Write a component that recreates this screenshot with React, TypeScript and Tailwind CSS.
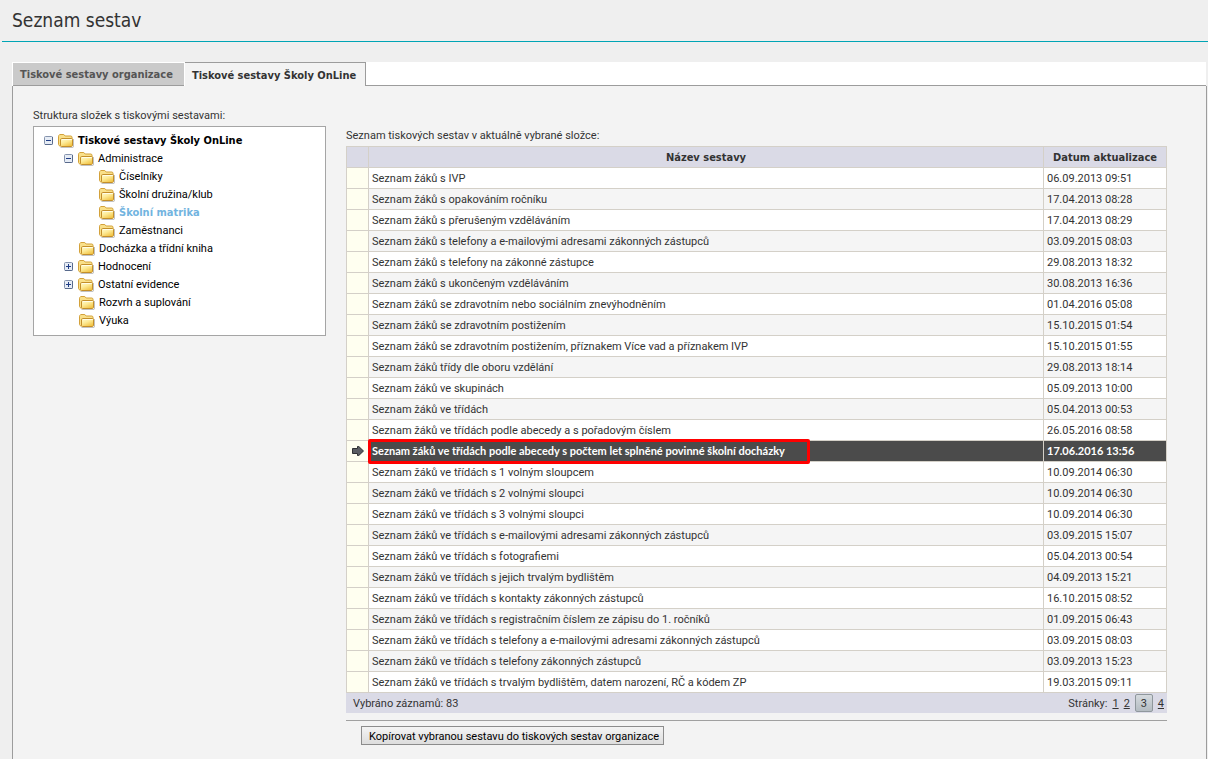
import { clsx } from 'clsx';

interface TreeNode {
  label: string;
  level: number;
  state?: 'open' | 'closed';
  selected?: boolean;
}

interface Report {
  name: string;
  updated: string;
}

const TREE: TreeNode[] = [
  { label: 'Tiskové sestavy Školy OnLine', level: 0, state: 'open' },
  { label: 'Administrace', level: 1, state: 'open' },
  { label: 'Číselníky', level: 2 },
  { label: 'Školní družina/klub', level: 2 },
  { label: 'Školní matrika', level: 2, selected: true },
  { label: 'Zaměstnanci', level: 2 },
  { label: 'Docházka a třídní kniha', level: 1 },
  { label: 'Hodnocení', level: 1, state: 'closed' },
  { label: 'Ostatní evidence', level: 1, state: 'closed' },
  { label: 'Rozvrh a suplování', level: 1 },
  { label: 'Výuka', level: 1 },
];

const REPORTS: Report[] = [
  { name: 'Seznam žáků s IVP', updated: '06.09.2013 09:51' },
  { name: 'Seznam žáků s opakováním ročníku', updated: '17.04.2013 08:28' },
  { name: 'Seznam žáků s přerušeným vzděláváním', updated: '17.04.2013 08:29' },
  { name: 'Seznam žáků s telefony a e-mailovými adresami zákonných zástupců', updated: '03.09.2015 08:03' },
  { name: 'Seznam žáků s telefony na zákonné zástupce', updated: '29.08.2013 18:32' },
  { name: 'Seznam žáků s ukončeným vzděláváním', updated: '30.08.2013 16:36' },
  { name: 'Seznam žáků se zdravotním nebo sociálním znevýhodněním', updated: '01.04.2016 05:08' },
  { name: 'Seznam žáků se zdravotním postižením', updated: '15.10.2015 01:54' },
  { name: 'Seznam žáků se zdravotním postižením, příznakem Více vad a příznakem IVP', updated: '15.10.2015 01:55' },
  { name: 'Seznam žáků třídy dle oboru vzdělání', updated: '29.08.2013 18:14' },
  { name: 'Seznam žáků ve skupinách', updated: '05.09.2013 10:00' },
  { name: 'Seznam žáků ve třídách', updated: '05.04.2013 00:53' },
  { name: 'Seznam žáků ve třídách podle abecedy a s pořadovým číslem', updated: '26.05.2016 08:58' },
  { name: 'Seznam žáků ve třídách podle abecedy s počtem let splněné povinné školní docházky', updated: '17.06.2016 13:56' },
  { name: 'Seznam žáků ve třídách s 1 volným sloupcem', updated: '10.09.2014 06:30' },
  { name: 'Seznam žáků ve třídách s 2 volnými sloupci', updated: '10.09.2014 06:30' },
  { name: 'Seznam žáků ve třídách s 3 volnými sloupci', updated: '10.09.2014 06:30' },
  { name: 'Seznam žáků ve třídách s e-mailovými adresami zákonných zástupců', updated: '03.09.2015 15:07' },
  { name: 'Seznam žáků ve třídách s fotografiemi', updated: '05.04.2013 00:54' },
  { name: 'Seznam žáků ve třídách s jejich trvalým bydlištěm', updated: '04.09.2013 15:21' },
  { name: 'Seznam žáků ve třídách s kontakty zákonných zástupců', updated: '16.10.2015 08:52' },
  { name: 'Seznam žáků ve třídách s registračním číslem ze zápisu do 1. ročníků', updated: '01.09.2015 06:43' },
  { name: 'Seznam žáků ve třídách s telefony a e-mailovými adresami zákonných zástupců', updated: '03.09.2015 08:03' },
  { name: 'Seznam žáků ve třídách s telefony zákonných zástupců', updated: '03.09.2013 15:23' },
  { name: 'Seznam žáků ve třídách s trvalým bydlištěm, datem narození, RČ a kódem ZP', updated: '19.03.2015 09:11' },
];

const SELECTED = 13;
const PAGES = [1, 2, 3, 4];
const CURRENT_PAGE = 3;

function FolderIcon() {
  return (
    <svg width="16" height="16" viewBox="0 0 16 16" className="shrink-0" aria-hidden="true">
      <defs>
        <linearGradient id="folder" x1="0" y1="0" x2="0.6" y2="1">
          <stop offset="0" stopColor="#fffbd2" />
          <stop offset="0.5" stopColor="#fdeb98" />
          <stop offset="1" stopColor="#f2c548" />
        </linearGradient>
      </defs>
      <path d="M2.5 15.5h12c.6 0 1-.4 1-1V7" fill="none" stroke="#8f8f8f" strokeOpacity=".55" />
      <path
        d="M2 14.5L.5 12.5V4.2c0-.4.2-.7.5-1l.7-.7h4.1l1.4 1.5h5.6c.7 0 1.2.5 1.2 1.2v7"
        fill="#f9e08a"
        stroke="#d3a13a"
      />
      <path
        d="M3.5 14.5c-.8 0-1-.5-1-1.2V7.8c0-.8.4-1.3 1.2-1.3h9.6c.8 0 1.2.4 1.2 1.1v5.6c0 .8-.5 1.3-1.2 1.3z"
        fill="url(#folder)"
        stroke="#c48f2a"
      />
      <path d="M4 7.5h9.8" stroke="#fffde8" />
    </svg>
  );
}

function ToggleIcon({ open }: { open: boolean }) {
  return (
    <svg width="9" height="9" viewBox="0 0 9 9" aria-hidden="true">
      <rect x=".5" y=".5" width="8" height="8" rx="1" fill="#e6ecf5" stroke="#8593ad" />
      <path d="M1 8.5h6.5a1 1 0 0 0 1-1V1" fill="none" stroke="#586a8c" />
      <path d={open ? 'M2 4.5h5' : 'M2 4.5h5M4.5 2v5'} stroke="#1f3d86" />
    </svg>
  );
}

function ArrowIcon() {
  return (
    <svg width="12" height="10" viewBox="0 0 12 10" className="mx-auto" role="img" aria-label="Vybraný řádek">
      <path d="M.5 2.5h5v-2h1.3L11.5 5 6.8 9.5H5.5v-2h-5z" fill="#5b5d63" stroke="#2f3033" />
    </svg>
  );
}

function FolderTree() {
  return (
    <ul className="border border-[#a5a5a5] bg-white pt-1 pb-1.5 text-black">
      {TREE.map((node) => (
        <li
          key={node.label}
          className={clsx(
            'flex h-[18px] items-center',
            node.level === 0 && "pl-[10px] font-['DejaVu_Sans_Condensed',sans-serif] font-bold",
            node.level === 1 && 'pl-[30px]',
            node.level === 2 && 'pl-[65px]',
          )}
        >
          {node.level < 2 && (
            <span className={clsx('flex shrink-0', node.state ? 'w-[14px]' : 'w-[15px]')}>
              {node.state && (
                <button type="button" aria-label={node.state === 'open' ? 'Sbalit' : 'Rozbalit'}>
                  <ToggleIcon open={node.state === 'open'} />
                </button>
              )}
            </span>
          )}
          <a
            href="#"
            className={clsx(
              'flex items-center gap-1 whitespace-nowrap',
              node.selected && "font-['DejaVu_Sans_Condensed',sans-serif] font-bold text-[#72b4e0]",
            )}
          >
            <FolderIcon />
            <span className="pt-0.5">{node.label}</span>
          </a>
        </li>
      ))}
    </ul>
  );
}

function ReportTable() {
  return (
    <table className="w-full table-fixed border-collapse border border-[#d4d0c8]">
      <colgroup>
        <col className="w-[22px]" />
        <col />
        <col className="w-[123px]" />
      </colgroup>
      <thead>
        <tr className="h-[21px] bg-[#dadae6] font-['DejaVu_Sans_Condensed',sans-serif]">
          <th className="border border-[#d4d0c8]" />
          <th className="border border-[#d4d0c8] pt-0.5 leading-4">Název sestavy</th>
          <th className="border border-[#d4d0c8] pt-0.5 leading-4">Datum aktualizace</th>
        </tr>
      </thead>
      <tbody>
        {REPORTS.map((report, i) => {
          const selected = i === SELECTED;
          const cell = clsx(
            'border border-[#d4d0c8] px-[3px] leading-4 whitespace-nowrap',
            !selected && 'pt-0.5',
          );
          return (
            <tr
              key={report.name}
              className={clsx(
                'h-[21px]',
                selected
                  ? "bg-[#4b4b4b] font-['Lato',sans-serif] font-bold text-white"
                  : i % 2
                    ? 'bg-[#f5f5f5]'
                    : 'bg-white',
              )}
            >
              <td className="border border-[#d4d0c8] bg-[#fffff0]">{selected && <ArrowIcon />}</td>
              <td className={clsx('relative', cell)}>
                {report.name}
                {selected && (
                  <span className="absolute -top-0.5 -left-px h-[25px] w-[442px] rounded-xs border-3 border-[#ff0000]" />
                )}
              </td>
              <td className={cell}>{report.updated}</td>
            </tr>
          );
        })}
      </tbody>
    </table>
  );
}

function Pager() {
  return (
    <div className="flex h-5 items-center justify-between bg-[#dadae6] pr-[3px] pl-[7px]">
      <span className="pt-0.5">Vybráno záznamů: 83</span>
      <nav className="flex items-center gap-[5px]">
        <span className="pt-0.5">Stránky:</span>
        {PAGES.map((page) =>
          page === CURRENT_PAGE ? (
            <span
              key={page}
              className="flex h-[18px] w-[18px] items-center justify-center rounded-xs border border-[#8f979c] bg-linear-to-b from-[#d5dade] to-[#b4bcc2] pt-0.5"
            >
              {page}
            </span>
          ) : (
            <a key={page} href="#" className="pt-0.5 underline">
              {page}
            </a>
          ),
        )}
      </nav>
    </div>
  );
}

export default function App() {
  return (
    <div className="flex min-h-screen flex-col bg-[#efefef] font-['Roboto',sans-serif] text-[11px] leading-4 text-[#333333]">
      <header className="ml-0.5 h-[42px] border-b border-[#00a5b5] pt-1 pl-[10px]">
        <h1 className="font-['DejaVu_Sans_Condensed',sans-serif] text-[19px] leading-8">Seznam sestav</h1>
      </header>

      <main className="mt-5 mr-px ml-3 flex grow flex-col">
        <div
          role="tablist"
          className="mr-px flex h-6 bg-white font-['DejaVu_Sans_Condensed',sans-serif] font-bold"
        >
          <button
            type="button"
            role="tab"
            aria-selected="false"
            className="mt-px ml-px border-b border-[#9c9c9c] bg-[#cacaca] pt-0.5 pr-[11px] pl-[7px] text-[#555555]"
          >
            Tiskové sestavy organizace
          </button>
          <button
            type="button"
            role="tab"
            aria-selected="true"
            className="ml-px border-t border-r border-[#9c9c9c] bg-[#f3f3f3] pt-0.5 pr-[9px] pl-[7px]"
          >
            Tiskové sestavy Školy OnLine
          </button>
          <div className="grow border-b border-[#9c9c9c]" />
        </div>

        <div className="flex grow items-start gap-5 border-x border-[#9c9c9c] bg-[#f3f3f3] pt-[22px] pr-[39px] pl-5">
          <section className="w-[293px] shrink-0">
            <h2 className="mb-0.5">Struktura složek s tiskovými sestavami:</h2>
            <FolderTree />
          </section>

          <section className="grow pt-5">
            <h2 className="mb-0.5">Seznam tiskových sestav v aktuálně vybrané složce:</h2>
            <ReportTable />
            <Pager />
            <div className="mt-[7px] border-t border-[#a0a0a0] pt-[5px] pl-[15px]">
              <button
                type="button"
                className="h-[19px] border border-[#8c8c8c] bg-linear-to-b from-[#f4f4f4] to-[#dddddd] pt-0.5 pr-1 pl-[7px] text-black"
              >
                Kopírovat vybranou sestavu do tiskových sestav organizace
              </button>
            </div>
          </section>
        </div>
      </main>
    </div>
  );
}
